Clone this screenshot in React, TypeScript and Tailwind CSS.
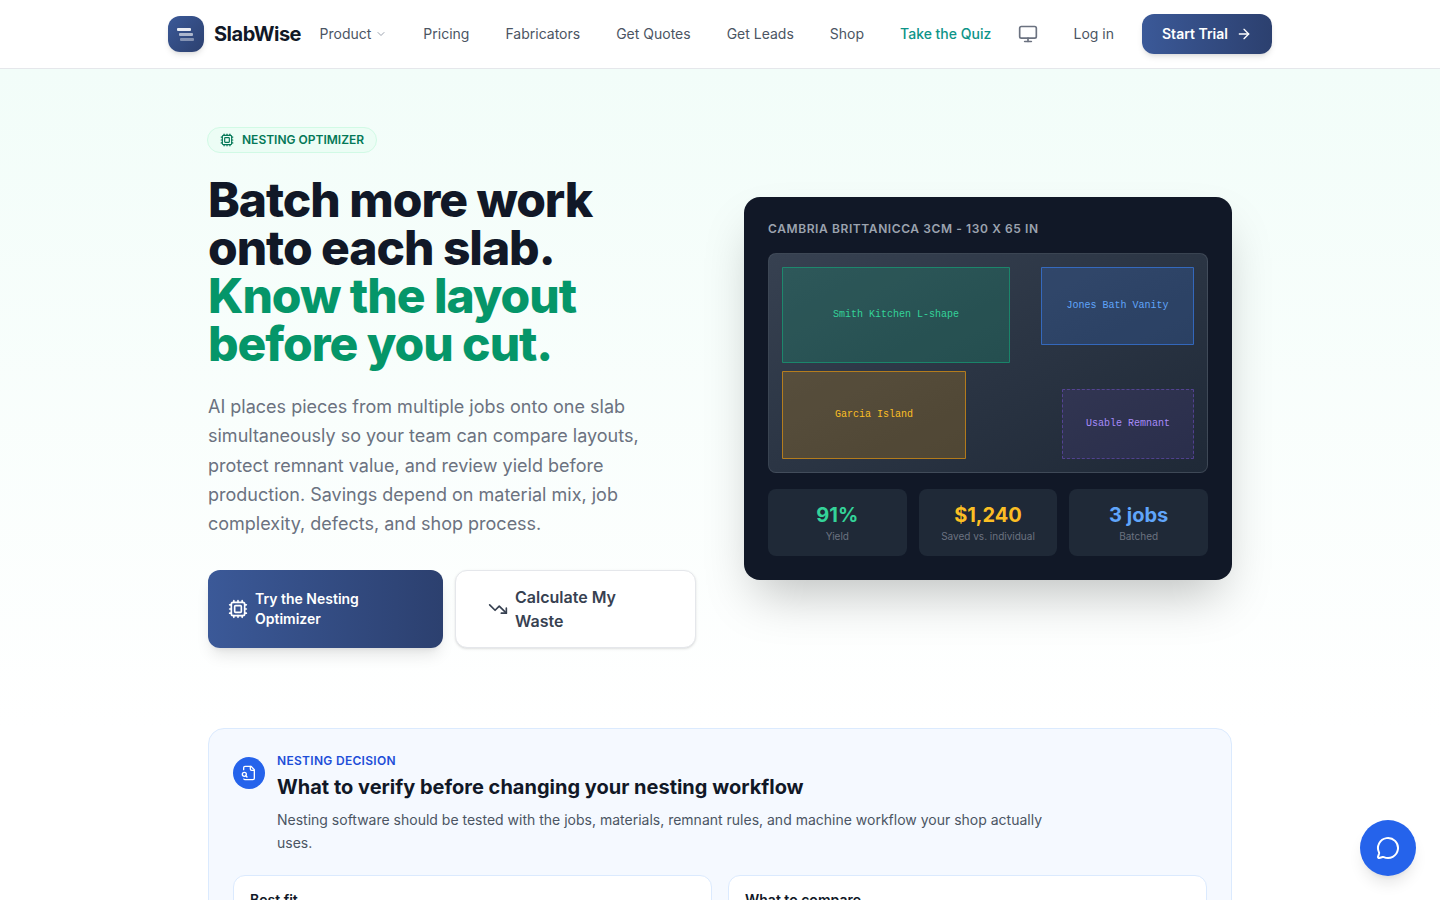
import { ArrowRight, ChevronDown, Cpu, MessageCircle, Monitor, TrendingDown } from "lucide-react";

const navLinks = ["Pricing", "Fabricators", "Get Quotes", "Get Leads", "Shop"];

const stats = [
  { value: "91%", label: "Yield", color: "text-[#34d399]" },
  { value: "$1,240", label: "Saved vs. individual", color: "text-[#fbbf24]" },
  { value: "3 jobs", label: "Batched", color: "text-[#60a5fa]" },
];

function Navbar() {
  return (
    <header className="border-b border-[#e5e7eb] bg-white shadow-sm">
      <div className="mx-auto flex h-[68px] max-w-6xl items-center px-6">
        {/* Logo */}
        <div className="flex items-center gap-2.5">
          <div className="flex h-9 w-9 flex-col items-center justify-center gap-[2px] rounded-xl bg-gradient-to-br from-[#3b5998] to-[#2c406f] shadow-md">
            <span className="ml-[-4px] h-[3px] w-[14px] rounded-[1px] bg-white/90" />
            <span className="ml-[-1px] h-[3px] w-[14px] rounded-[1px] bg-white/60" />
            <span className="ml-[2px] h-[3px] w-[14px] rounded-[1px] bg-white/40" />
          </div>
          <span className="text-xl font-bold tracking-tight text-[#111827]">SlabWise</span>
        </div>

        {/* Links */}
        <nav className="ml-[18.5px] flex items-center gap-9 text-sm text-[#4b5563]">
          <span className="flex items-center gap-1">
            Product <ChevronDown className="h-3 w-3 text-[#9ca3af]" />
          </span>
          {navLinks.map((link) => (
            <span key={link}>{link}</span>
          ))}
          <span className="font-medium text-[#0d9488]">Take the Quiz</span>
        </nav>

        <div className="ml-auto flex items-center">
          <Monitor className="h-5 w-5 text-[#6b7280]" />
          <span className="ml-9 text-sm text-[#4b5563]">Log in</span>
          <button className="ml-7 flex h-10 w-[130px] items-center justify-center gap-2 rounded-xl bg-gradient-to-r from-[#3b5998] to-[#2c406f] text-sm font-semibold text-white shadow-md">
            Start Trial <ArrowRight className="h-4 w-4" />
          </button>
        </div>
      </div>
    </header>
  );
}

function SlabCard() {
  return (
    <div className="mt-[2px] rounded-2xl bg-[#111827] p-6 shadow-2xl">
      <p className="mb-4 text-xs font-semibold tracking-wider text-[#9ca3af] uppercase">
        Cambria Brittanicca 3cm - 130 x 65 in
      </p>

      {/* Slab layout */}
      <div className="relative h-[220px] rounded-lg border border-[#4b5563]/60 bg-gradient-to-br from-[#374151] to-[#1f2937] font-['Liberation_Mono',monospace] text-[10px]">
        <div className="absolute top-[13px] left-[13px] flex h-[96px] w-[228px] items-center justify-center rounded-[1px] border border-[#10b981]/50 bg-[#10b981]/20 pb-0.5 text-[#34d399]">
          Smith Kitchen L-shape
        </div>
        <div className="absolute top-[13px] left-[272px] flex h-[78px] w-[153px] items-center justify-center rounded-[1px] border border-[#3b82f6]/60 bg-[#3b82f6]/20 pb-0.5 text-[#60a5fa]">
          Jones Bath Vanity
        </div>
        <div className="absolute top-[117px] left-[13px] flex h-[88px] w-[184px] items-center justify-center rounded-[1px] border border-[#f59e0b]/60 bg-[#f59e0b]/20 pb-0.5 text-[#fbbf24]">
          Garcia Island
        </div>
        <div className="absolute top-[135px] left-[293px] flex h-[70px] w-[132px] items-center justify-center rounded-[1px] border border-dashed border-[#8b5cf6]/40 bg-[#8b5cf6]/10 pb-0.5 text-[#a78bfa]">
          Usable Remnant
        </div>
      </div>

      {/* Stats */}
      <div className="mt-4 grid grid-cols-3 gap-3">
        {stats.map((stat) => (
          <div key={stat.label} className="rounded-lg bg-[#1f2937] py-3 text-center">
            <p className={`text-xl font-bold ${stat.color}`}>{stat.value}</p>
            <p className="text-[10px] text-[#6b7280]">{stat.label}</p>
          </div>
        ))}
      </div>
    </div>
  );
}

function Hero() {
  return (
    <section className="bg-gradient-to-b from-[#f2fdf9] to-white pt-[58px] pb-20">
      <div className="mx-auto grid max-w-5xl grid-cols-2 items-center gap-12">
        <div>
          <span className="-ml-px inline-flex h-[26px] items-center gap-2 rounded-full border border-[#d1fae5] bg-[#ecfdf5] px-3 text-xs font-semibold text-[#047857]">
            <Cpu className="h-3.5 w-3.5" />
            NESTING OPTIMIZER
          </span>
          <h1 className="mt-[23px] text-5xl leading-none font-extrabold tracking-[-1.05px] text-[#111827]">
            Batch more work onto each slab.
            <br />
            <span className="text-[#059669]">
              Know the layout
              <br />
              before you cut.
            </span>
          </h1>
          <p className="mt-6 text-lg leading-relaxed text-[#6b7280]">
            AI places pieces from multiple jobs onto one slab simultaneously so your team can compare layouts, protect
            remnant value, and review yield before production. Savings depend on material mix, job complexity, defects,
            and shop process.
          </p>
          <div className="mt-8 flex gap-3">
            <button className="flex w-[235px] items-center gap-[7px] rounded-xl bg-gradient-to-r from-[#3b5998] to-[#2c406f] px-5 text-left text-sm font-semibold text-white shadow-lg">
              <Cpu className="h-5 w-5 shrink-0" />
              Try the Nesting Optimizer
            </button>
            <button className="flex w-[241px] items-center gap-[7px] rounded-xl border border-[#e5e7eb] bg-white px-8 py-3.5 text-left font-semibold text-[#374151] shadow-sm">
              <TrendingDown className="h-5 w-5 shrink-0" />
              Calculate My Waste
            </button>
          </div>
        </div>
        <SlabCard />
      </div>
    </section>
  );
}

function DecisionPanel() {
  return (
    <section className="mx-auto max-w-5xl rounded-2xl border border-[#dbeafe] bg-[#f5f9ff] p-6">
      <div className="flex gap-3">
        <div className="mt-1 flex h-8 w-8 shrink-0 items-center justify-center rounded-full bg-[#2563eb] text-white">
          {/* file with the magnifier at its lower left */}
          <svg
            viewBox="0 0 24 24"
            fill="none"
            stroke="currentColor"
            strokeWidth="2"
            strokeLinecap="round"
            strokeLinejoin="round"
            className="h-4 w-4"
          >
            <path d="M14 2v4a2 2 0 0 0 2 2h4" />
            <path d="M4.268 21a2 2 0 0 0 1.727 1H18a2 2 0 0 0 2-2V7l-5-5H6a2 2 0 0 0-2 2v3" />
            <path d="m9 18-1.5-1.5" />
            <circle cx="5" cy="14" r="3" />
          </svg>
        </div>
        <div>
          <p className="text-xs font-semibold tracking-wide text-[#1d4ed8]">NESTING DECISION</p>
          <h2 className="mt-1 text-xl font-bold text-[#111827]">What to verify before changing your nesting workflow</h2>
          <p className="mt-2 max-w-3xl text-sm leading-relaxed text-[#4b5563]">
            Nesting software should be tested with the jobs, materials, remnant rules, and machine workflow your shop
            actually uses.
          </p>
        </div>
      </div>
      <div className="mt-5 grid grid-cols-2 gap-4">
        <div className="rounded-xl border border-[#dbeafe] bg-white p-4 pt-3.5">
          <p className="text-sm font-semibold text-[#111827]">Best fit</p>
        </div>
        <div className="rounded-xl border border-[#dbeafe] bg-white p-4 pt-3.5">
          <p className="text-sm font-semibold text-[#111827]">What to compare</p>
        </div>
      </div>
    </section>
  );
}

export default function App() {
  return (
    <div className="min-h-screen bg-white font-[Inter,sans-serif] antialiased">
      <Navbar />
      <Hero />
      <DecisionPanel />

      {/* Chat button */}
      <button className="fixed right-6 bottom-6 flex h-14 w-14 items-center justify-center rounded-full bg-[#2563eb] text-white shadow-lg">
        <MessageCircle className="h-6 w-6" />
      </button>
    </div>
  );
}
